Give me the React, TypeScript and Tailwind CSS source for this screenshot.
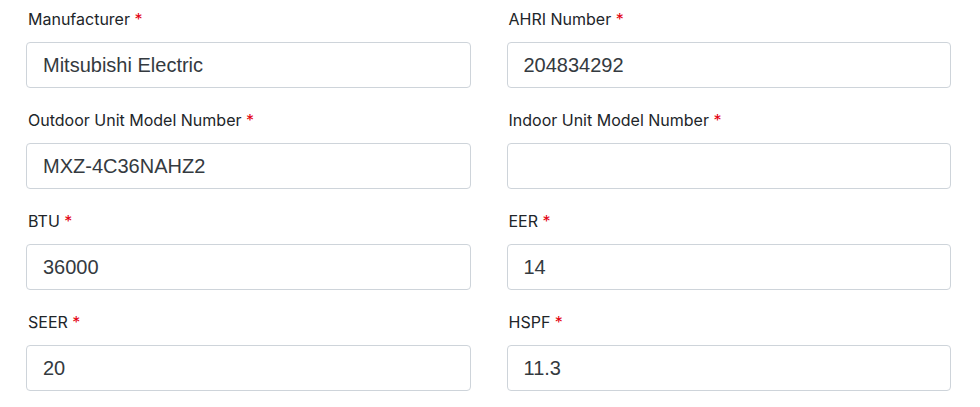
import React from "react";

type Field = { label: string; value: string };

const fields: Field[] = [
  { label: "Manufacturer", value: "Mitsubishi Electric" },
  { label: "AHRI Number", value: "204834292" },
  { label: "Outdoor Unit Model Number", value: "MXZ-4C36NAHZ2" },
  { label: "Indoor Unit Model Number", value: "" },
  { label: "BTU", value: "36000" },
  { label: "EER", value: "14" },
  { label: "SEER", value: "20" },
  { label: "HSPF", value: "11.3" },
];

function FormField({ label, value }: Field) {
  return (
    <div className="flex flex-col">
      <label className="mb-[11px] pl-[2px] text-[16px] leading-6 text-[#212529] font-['Inter',sans-serif]">
        {label} <span className="text-[#e3000f]">*</span>
      </label>
      <input
        type="text"
        defaultValue={value}
        className="h-[46px] w-full rounded border border-[#ced4da] bg-white px-4 text-[20px] text-[#343a40] font-['Liberation_Sans',Arial,sans-serif] outline-none"
      />
    </div>
  );
}

export default function App() {
  return (
    <div className="w-[980px] h-[407px] bg-white pt-[7px] pl-[26px] pr-[29px] overflow-hidden">
      <div className="grid grid-cols-2 gap-x-9 gap-y-5">
        {fields.map((f) => (
          <FormField key={f.label} {...f} />
        ))}
      </div>
    </div>
  );
}
